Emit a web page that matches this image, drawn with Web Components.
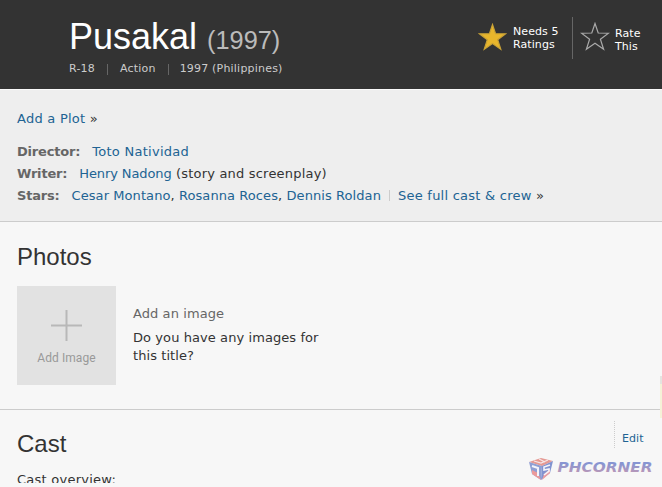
<!DOCTYPE html>
<html lang="en">
<head>
<meta charset="utf-8">
<title>Pusakal (1997)</title>
<style>
  html, body {
    margin: 0;
    height: 487px;
    overflow: hidden;
    background: #f7f7f7;
  }
  body {
    font: 13px/22px "DejaVu Sans", Verdana, sans-serif;
    letter-spacing: 0.08px;
    color: #333;
  }
</style>
</head>
<body>
<title-page></title-page>

<script>
const define = (name, html) => {
  const template = document.createElement("template");
  template.innerHTML = html;
  customElements.define(name, class extends HTMLElement {
    constructor() {
      super();
      this.attachShadow({ mode: "open" });
      this.shadowRoot.appendChild(template.content.cloneNode(true));
    }
  });
};

define("text-link", `<style>
  :host { display: inline; color: #216393; cursor: pointer; }
</style><slot></slot>`);

define("rating-star", `
<style>
  :host { display: block; width: 30px; height: 30px; }
  svg { display: block; width: 100%; height: 100%; }
  path { fill: var(--star-fill, none); stroke: var(--star-line, #aaa); stroke-width: 1.2; }
</style>
<svg viewBox="0 0 30 30">
  <path d="M15 1.5 L18.2 11 L28.5 11.2 L20.4 17.3 L23.6 27.3 L15 21.2 L6.4 27.3 L9.6 17.3 L1.5 11.2 L11.8 11 Z"/>
</svg>
`);

define("title-header", `
<style>
  :host {
    display: flex;
    justify-content: space-between;
    box-sizing: border-box;
    height: 89px;
    padding: 16px 20px 0 69px;
    background: #333;
    color: #fff;
  }
  h1 {
    margin: 0;
    font: 36px/42px "Liberation Sans", Arial, sans-serif;
    letter-spacing: 0;
    white-space: nowrap;
  }
  .year { font-size: 25.3px; color: #bbb; }
  .facts {
    display: flex;
    margin-top: -2px;
    font-size: 11px;
    line-height: 20px;
    letter-spacing: 0.2px;
    color: #ccc;
    white-space: nowrap;
  }
  .facts i { width: 1px; height: 11px; margin: 5px 12px 0; background: #666; }
  .facts i + span + i { margin-right: 11px; }
  .ratings { display: flex; width: 163px; font-size: 11px; line-height: 13px; white-space: nowrap; }
  .rate { display: flex; }
  .needs { width: 80px; }
  .needs rating-star {
    --star-fill: #e8b62c;
    --star-line: #c9a236;
    width: 29px;
    height: 29px;
    margin: 7px 6px 0 -1px;
  }
  .needs span { margin-top: 9px; }
  .mine rating-star { margin: 6px 5px 0 0; }
  .mine span { margin-top: 11px; }
  .bar { width: 1px; height: 42px; margin: 1px 7px 0 13px; background: #666; }
</style>
<div>
  <h1>Pusakal <span class="year">(1997)</span></h1>
  <div class="facts"><span>R-18</span><i></i><span>Action</span><i></i><span>1997 (Philippines)</span></div>
</div>
<div class="ratings">
  <div class="rate needs">
    <rating-star></rating-star>
    <span>Needs 5<br>Ratings</span>
  </div>
  <div class="bar"></div>
  <div class="rate mine">
    <rating-star></rating-star>
    <span>Rate<br>This</span>
  </div>
</div>
`);

define("credit-row", `
<style>
  :host { display: flex; height: 22px; white-space: nowrap; }
  .label { font-weight: bold; letter-spacing: -0.2px; color: #666; margin-right: 12px; }
</style>
<span class="label"><slot name="label"></slot></span><span><slot></slot></span>
`);

define("title-summary", `
<style>
  :host {
    display: block;
    box-sizing: border-box;
    height: 133px;
    padding: 18px 17px 0;
    background: #eee;
    border-top: 1px solid #fafafa;
    border-bottom: 1px solid #ccc;
  }
  .plot { margin-bottom: 11px; letter-spacing: 0.25px; }
  .director { letter-spacing: 0.28px; }
  .writer text-link { letter-spacing: -0.1px; }
  .writer { letter-spacing: 0.2px; }
  .cast { letter-spacing: 0.24px; }
  .sep { display: inline-block; width: 1px; height: 11px; margin: 0 8px; background: #ccc; vertical-align: -1px; }
</style>
<div class="plot"><text-link>Add a Plot</text-link> »</div>
<credit-row class="director"><span slot="label">Director:</span><text-link>Toto Natividad</text-link></credit-row>
<credit-row class="writer"><span slot="label">Writer:</span><text-link>Henry Nadong</text-link> (story and screenplay)</credit-row>
<credit-row><span slot="label">Stars:</span><text-link>Cesar Montano</text-link>, <text-link>Rosanna Roces</text-link>, <text-link>Dennis Roldan</text-link><span class="sep"></span><span class="cast"><text-link>See full cast &amp; crew</text-link> »</span></credit-row>
`);

define("section-title", `
<style>
  :host {
    display: block;
    font: 24px/28px "Liberation Sans", Arial, sans-serif;
    letter-spacing: 0;
    color: #333;
  }
</style>
<slot></slot>
`);

define("image-placeholder", `
<style>
  :host {
    display: flex;
    flex-direction: column;
    align-items: center;
    box-sizing: border-box;
    width: 99px;
    height: 99px;
    padding-top: 24px;
    background: #e2e2e2;
    font: 12px/16px Roboto, sans-serif;
    color: #999;
  }
  svg { display: block; margin-bottom: 9px; }
</style>
<svg width="31" height="31"><path d="M15.5 0V31M0 15.5H31" stroke="#b8b8b8" stroke-width="2"/></svg>
<span>Add Image</span>
`);

define("photos-section", `
<style>
  :host {
    display: block;
    box-sizing: border-box;
    height: 188px;
    padding: 21px 17px 0;
    border-bottom: 1px solid #ccc;
  }
  .row { display: flex; gap: 17px; margin-top: 15px; }
  .text { padding-top: 17px; line-height: 18px; white-space: nowrap; }
  .add { line-height: 22px; color: #666; margin-bottom: 4px; }
</style>
<section-title>Photos</section-title>
<div class="row">
  <image-placeholder></image-placeholder>
  <div class="text">
    <div class="add">Add an image</div>
    <div>Do you have any images for<br>this title?</div>
  </div>
</div>
`);

define("site-logo", `
<style>
  :host { display: block; }
  svg { display: block; }
  text { font: italic bold 16px "DejaVu Sans", Verdana, sans-serif; letter-spacing: 0; }
</style>
<svg width="126" height="26" viewBox="0 0 126 26">
  <defs>
    <linearGradient id="word" x1="0" y1="0" x2="0" y2="1">
      <stop offset="0.3" stop-color="#8795d2"/>
      <stop offset="0.8" stop-color="#b897b8"/>
    </linearGradient>
  </defs>
  <path d="M1 5L13 1L25 4L14 9Z" fill="#e59a94"/>
  <path d="M1 5L14 9L13 23L4 17Z" fill="#8f9fd4"/>
  <path d="M25 4L14 9L13 23L22 16Z" fill="#8193d0"/>
  <path d="M4 13L10 16L13 23L4 17Z" fill="#ec9a9a"/>
  <path d="M16 17L22 12V16L14 23Z" fill="#ea9da2"/>
  <path d="M6 4L13 6L20 3M11 2L17 5" fill="none" stroke="#f6e6e6" stroke-width="1.2"/>
  <path d="M4 9L10 11V19" fill="none" stroke="#f4f4fa" stroke-width="2"/>
  <path d="M22 8L16 10V13L21 12V14L16 18" fill="none" stroke="#f4f4fa" stroke-width="1.6"/>
  <text transform="translate(29.5 15) scale(1 0.92)" fill="url(#word)" textLength="95" lengthAdjust="spacingAndGlyphs">PHCORNER</text>
</svg>
`);

define("cast-section", `
<style>
  :host {
    display: flex;
    justify-content: space-between;
    box-sizing: border-box;
    height: 73px;
    padding: 0 8px 0 17px;
    overflow: hidden;
  }
  section-title { padding-top: 20px; }
  .overview { margin-top: 11px; line-height: 22px; letter-spacing: 0.25px; }
  .side { display: flex; flex-direction: column; align-items: flex-end; }
  .edit {
    box-sizing: border-box;
    width: 40px;
    height: 27px;
    margin: 11px 0 9px;
    padding: 8px 0 0 7px;
    border-left: 1px dotted #ccc;
    font-size: 11px;
    line-height: 20px;
  }
</style>
<div>
  <section-title>Cast</section-title>
  <div class="overview">Cast overview:</div>
</div>
<div class="side">
  <div class="edit"><text-link>Edit</text-link></div>
  <site-logo></site-logo>
</div>
`);

define("title-page", `
<style>
  :host { display: block; position: relative; width: 662px; }
  /* edge of the side panel, over the page's right border */
  .edge {
    position: absolute;
    right: 0;
    top: 376px;
    width: 2px;
    height: 42px;
    background: #f5f2d8;
    border-top: 8px solid #e4e4e0;
    box-sizing: border-box;
  }
</style>
<title-header></title-header>
<title-summary></title-summary>
<photos-section></photos-section>
<cast-section></cast-section>
<div class="edge"></div>
`);
</script>
</body>
</html>
